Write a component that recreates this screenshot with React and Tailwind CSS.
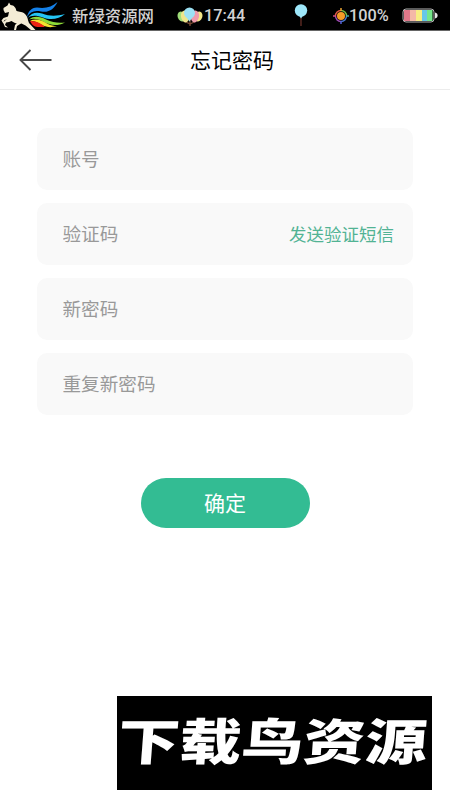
import clsx from 'clsx';

const fields = [
  { name: 'account', label: '账号' },
  { name: 'code', label: '验证码', action: '发送验证短信' },
  { name: 'password', label: '新密码' },
  { name: 'repeat', label: '重复新密码' },
];

function HorseLogo() {
  return (
    <svg className="h-[30px] w-[66px] shrink-0" viewBox="0 0 66 30">
      {/* rainbow tail */}
      <path d="M27 17C28 12 31 7.5 37 7.5C45 9 52 7 57.5 2C54 9 49 13 41 11.5C34 10 30 12 27 17Z" fill="#1480e8" />
      <path d="M28 18C31 13 36 11.5 42 13.5C50 16.5 57 16 65 14C59 19 51 20.500 43 17.5C36 15 31 15 28 18Z" fill="#25c4f4" />
      <path d="M29 19.5C34 15.5 40 16.5 46 19.5C53 23 59 23 65 22.5C57 26.5 50 25.5 43 21.5C38 18.5 33 18 29 19.5Z" fill="#8edb38" />
      <path d="M30 20.5C37 18 42 20.5 48 24C51 25.5 54 26 57 26C49 28.5 44 26.500 39 23.5C36 21.5 33 21 30 20.5Z" fill="#f4e331" />
      <path d="M30 21C36 20.5 41 23 45 27C40 27 34 28 31.5 23.5Z" fill="#ee2414" />
      {/* body */}
      <path
        d="M3.5 8L7.500 5.5L9 2.5L10.5 5C14 5 16 8 16.5 11C19 12 23 11.5 25.5 14.500C28 17 27.5 20 29 23L35.500 30H31L25.500 25.500L21.500 23.500C18 24.500 14 23 11.500 21L9 22L6 22.5L5 25L8 27.5L5 27L3 22.500L5 20.500L7 19.500L4.5 20L3 23L1.5 20.5L3.5 18L8 16.5L9 12L5 13L3.500 10Z"
        fill="#f4ecd5"
      />
      <path d="M21 23.500L17 26L16 30H14L15 25L18 22Z" fill="#f4ecd5" />
    </svg>
  );
}

function Balloons() {
  return (
    <svg className="h-[22px] w-[26px]" viewBox="0 0 26 22">
      <path d="M7 17L13 20L19 17M13 14V22" stroke="#7a4b35" strokeWidth="1.3" fill="none" />
      <ellipse cx="4.5" cy="12.5" rx="3.8" ry="5" fill="#9fdc78" transform="rotate(-20 4.5 12.5)" />
      <ellipse cx="21.5" cy="12.5" rx="3.8" ry="5" fill="#f3e587" transform="rotate(20 21.5 12.5)" />
      <ellipse cx="8" cy="12.5" rx="4" ry="6" fill="#eee58a" transform="rotate(-12 8 12.5)" />
      <ellipse cx="18" cy="12.5" rx="4" ry="6" fill="#ef9aab" transform="rotate(12 18 12.5)" />
      <circle cx="12.5" cy="9" r="5.5" fill="#9ce1f4" />
      <path d="M10 14L12.5 17.5L15 14Z" fill="#9ce1f4" />
    </svg>
  );
}

function Balloon() {
  return (
    <svg className="h-[24px] w-[14px]" viewBox="0 0 14 24">
      <path d="M7 13V23" stroke="#6e332a" strokeWidth="1.2" />
      <circle cx="7" cy="7.5" r="6.2" fill="#9de7fa" />
      <path d="M5 12.5L7 15.5L9 12.5Z" fill="#9de7fa" />
    </svg>
  );
}

function Target() {
  return (
    <svg className="h-4 w-4" viewBox="0 0 16 16" fill="none">
      <path d="M8 2.5A5.5 5.5 0 0 1 13.5 8" stroke="#74bd42" strokeWidth="1.4" />
      <path d="M13.5 8A5.5 5.5 0 0 1 8 13.5" stroke="#4a78d0" strokeWidth="1.4" />
      <path d="M8 13.5A5.5 5.5 0 0 1 2.5 8" stroke="#a04bb5" strokeWidth="1.4" />
      <path d="M2.5 8A5.5 5.5 0 0 1 8 2.5" stroke="#e35943" strokeWidth="1.4" />
      <path d="M8 0V3" stroke="#e9a332" strokeWidth="1.5" />
      <path d="M13 8H16" stroke="#46a8a6" strokeWidth="1.5" />
      <path d="M8 13V16" stroke="#5660d3" strokeWidth="1.5" />
      <path d="M0 8H3" stroke="#d04f80" strokeWidth="1.5" />
      <circle cx="8" cy="8" r="4" fill="#f49b27" />
    </svg>
  );
}

function Battery() {
  return (
    <svg className="h-[15px] w-[37px]" viewBox="0 0 37 15">
      <rect x="2" y="2" width="6.5" height="11" fill="#e0788a" />
      <rect x="8" y="2" width="6" height="11" fill="#f4b8a7" />
      <rect x="14" y="2" width="6" height="11" fill="#f7ed82" />
      <rect x="20" y="2" width="5.5" height="11" fill="#66c7e8" />
      <rect x="25" y="2" width="5.5" height="11" fill="#75e68a" />
      <rect x="1" y="1" width="31" height="13" rx="3" fill="none" stroke="#b5b5b5" strokeWidth="1" />
      <path d="M33 4.5C36.5 5 36.5 10 33 10.5Z" fill="#e9e9e9" />
    </svg>
  );
}

function StatusBar() {
  return (
    <div className="flex h-[31px] shrink-0 items-center border-b border-[#666] bg-black text-[#d2d2d2]">
      <HorseLogo />
      <span className="ml-[6px] w-[105px] whitespace-nowrap font-['Noto_Sans_CJK_SC',sans-serif] text-[16.4px] font-medium">
        新绿资源网
      </span>
      <Balloons />
      <span className="ml-px w-[90px] pt-[3px] font-[Roboto,sans-serif] text-[16.3px] font-medium">17:44</span>
      <Balloon />
      <span className="ml-[25px] pt-[2px]">
        <Target />
      </span>
      <span className="w-[53px] pt-[3px] font-[Roboto,sans-serif] text-[16.3px] font-medium">100%</span>
      <Battery />
    </div>
  );
}

function Field({ name, label, action }) {
  return (
    <div className="flex h-[62px] items-center rounded-[10px] bg-[#f9f9f9] pr-[19px] pl-[25.5px]">
      <input
        name={name}
        placeholder={label}
        className="min-w-0 flex-1 bg-transparent pb-[2px] text-[18.6px] text-[#333] outline-none placeholder:text-[#999]"
      />
      {action && <button className="shrink-0 text-[17.5px] text-[#52b394]">{action}</button>}
    </div>
  );
}

export default function App() {
  return (
    <div
      className={clsx(
        'flex h-[800px] w-[450px] flex-col overflow-hidden bg-white',
        "font-['Noto_Sans_CJK_SC',sans-serif]"
      )}
    >
      <StatusBar />

      <header className="grid h-[59px] shrink-0 grid-cols-[1fr_auto_1fr] items-center border-b border-[#ececec] pr-[5px] pl-[19px]">
        <button className="justify-self-start" aria-label="返回">
          <svg className="h-[22px] w-[33px]" viewBox="0 0 33 22" fill="none" stroke="#484848" strokeWidth="1.9">
            <path d="M11.5 1L1.5 11L11.5 21M1.5 11H32.5" />
          </svg>
        </button>
        <h1 className="text-[21px] text-black">忘记密码</h1>
      </header>

      <main className="flex flex-col items-center px-[37px] pt-[38px]">
        <div className="flex w-full flex-col gap-[13px]">
          {fields.map((field) => (
            <Field key={field.name} {...field} />
          ))}
        </div>
        <button className="mt-[63px] h-[50px] w-[169px] rounded-full bg-[#33bc93] text-[21px] text-white">确定</button>
      </main>

      <footer className="mt-auto mr-[18px] mb-[10px] flex h-[94px] w-[315px] items-center justify-center self-end bg-black pr-[3px] pb-[9px]">
        <span className="origin-center scale-x-[1.25] -skew-x-[3.5deg] whitespace-nowrap text-[49.5px] leading-none font-black text-white">
          下载鸟资源
        </span>
      </footer>
    </div>
  );
}
